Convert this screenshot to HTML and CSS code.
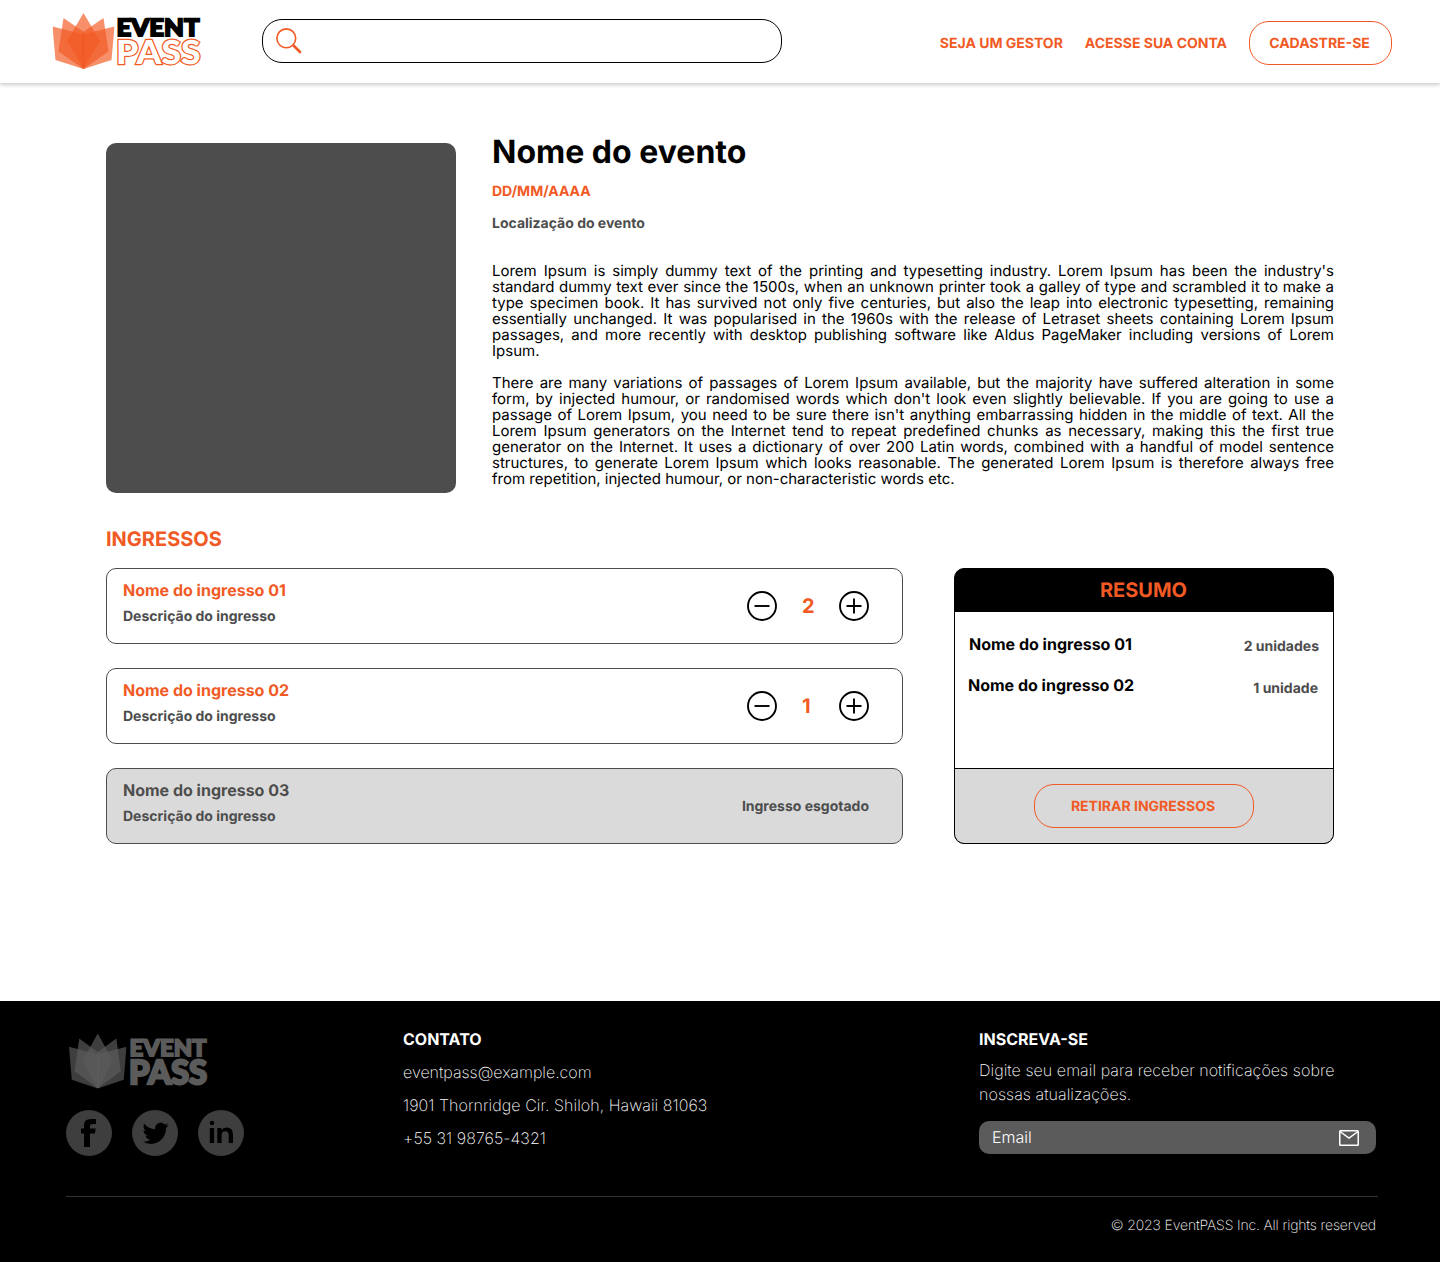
FILE: index.html
```html
<!DOCTYPE html>
<html lang="pt-BR">
<head>
<meta charset="utf-8">
<title>EventPASS</title>
<link rel="stylesheet" href="styles.css">
</head>
<body>
<svg class="defs" width="0" height="0" aria-hidden="true">
  <symbol id="crown" viewBox="0 0 62 56" preserveAspectRatio="none">
    <path d="M31 0 47.500 28 31 56 14.500 28Z"/>
    <path d="M0 13.500 32 21.500V55.500L31 56 3 47Z"/>
    <path d="M62 13.500 30 21.500V55.500L31 56 59 47Z"/>
    <path d="M11 5 32 19.500V55L31 56 6 38.500Z"/>
    <path d="M51 5 30 19.500V55L31 56 56 38.500Z"/>
  </symbol>
</svg>

<header class="topbar">
  <svg class="logo" width="152" height="58" viewBox="0 0 152 58">
    <use href="#crown" x="0.500" y="0" width="62" height="56"/>
    <text class="logo-event" x="64.500" y="23" textLength="83" lengthAdjust="spacingAndGlyphs">EVENT</text>
    <text class="logo-pass" x="64" y="51" textLength="84.500" lengthAdjust="spacingAndGlyphs">PASS</text>
  </svg>
  <div class="search">
    <svg width="26" height="26" viewBox="0 0 26 26"><circle cx="10.3" cy="10.3" r="9.4"/><path class="handle" d="M17.500 17.500 24 24"/></svg>
  </div>
  <nav class="nav">
    <a>SEJA UM GESTOR</a>
    <a>ACESSE SUA CONTA</a>
    <a class="pill">CADASTRE-SE</a>
  </nav>
</header>

<main>
  <section class="event">
    <div class="poster"></div>
    <div class="info">
      <h1>Nome do evento</h1>
      <p class="date">DD/MM/AAAA</p>
      <p class="place">Localização do evento</p>
      <p class="text">Lorem Ipsum is simply dummy text of the printing and typesetting industry. Lorem Ipsum has been the industry's standard dummy text ever since the 1500s, when an unknown printer took a galley of type and scrambled it to make a type specimen book. It has survived not only five centuries, but also the leap into electronic typesetting, remaining essentially unchanged. It was popularised in the 1960s with the release of Letraset sheets containing Lorem Ipsum passages, and more recently with desktop publishing software like Aldus PageMaker including versions of Lorem Ipsum.</p>
      <p class="text">There are many variations of passages of Lorem Ipsum available, but the majority have suffered alteration in some form, by injected humour, or randomised words which don't look even slightly believable. If you are going to use a passage of Lorem Ipsum, you need to be sure there isn't anything embarrassing hidden in the middle of text. All the Lorem Ipsum generators on the Internet tend to repeat predefined chunks as necessary, making this the first true generator on the Internet. It uses a dictionary of over 200 Latin words, combined with a handful of model sentence structures, to generate Lorem Ipsum which looks reasonable. The generated Lorem Ipsum is therefore always free from repetition, injected humour, or non-characteristic words etc.</p>
    </div>
  </section>

  <h2>INGRESSOS</h2>
  <section class="booking">
    <div class="tickets">
      <article class="ticket">
        <div><h3>Nome do ingresso 01</h3><p>Descrição do ingresso</p></div>
        <div class="stepper">
          <svg width="30" height="30" viewBox="0 0 30 30"><circle cx="15" cy="15" r="14"/><path d="M7.500 15h15"/></svg>
          <span>2</span>
          <svg width="30" height="30" viewBox="0 0 30 30"><circle cx="15" cy="15" r="14"/><path d="M7.500 15h15M15 7.500v15"/></svg>
        </div>
      </article>
      <article class="ticket">
        <div><h3>Nome do ingresso 02</h3><p>Descrição do ingresso</p></div>
        <div class="stepper">
          <svg width="30" height="30" viewBox="0 0 30 30"><circle cx="15" cy="15" r="14"/><path d="M7.500 15h15"/></svg>
          <span>1</span>
          <svg width="30" height="30" viewBox="0 0 30 30"><circle cx="15" cy="15" r="14"/><path d="M7.500 15h15M15 7.500v15"/></svg>
        </div>
      </article>
      <article class="ticket soldout">
        <div><h3>Nome do ingresso 03</h3><p>Descrição do ingresso</p></div>
        <p class="status">Ingresso esgotado</p>
      </article>
    </div>
    <aside class="summary">
      <h2>RESUMO</h2>
      <div class="lines">
        <div class="line"><strong>Nome do ingresso 01</strong><span>2 unidades</span></div>
        <div class="line second"><strong>Nome do ingresso 02</strong><span>1 unidade</span></div>
      </div>
      <div class="checkout"><a class="pill">RETIRAR INGRESSOS</a></div>
    </aside>
  </section>
</main>

<footer>
  <div class="columns">
    <div class="brand">
      <svg class="logo muted" width="142" height="57" viewBox="0 0 142 57">
        <use href="#crown" x="0" y="-0.500" width="57.500" height="55"/>
        <text class="logo-event" x="60.500" y="22" textLength="77" lengthAdjust="spacingAndGlyphs">EVENT</text>
        <text class="logo-pass" x="60" y="49.500" textLength="78" lengthAdjust="spacingAndGlyphs">PASS</text>
      </svg>
      <div class="social">
        <svg width="46" height="46" viewBox="0 0 46 46"><circle cx="23" cy="23" r="23"/><path d="M18 37V23.500h-3v-5h3v-3.200q0-6.300 7-6.300H30v5h-3q-3 0-3 2.200v2.300h5.700l-.8 5H24V37Z"/></svg>
        <svg width="46" height="46" viewBox="0 0 46 46"><circle cx="23" cy="23" r="23"/><path transform="translate(10.500 10.300) scale(1.090)" d="M23.950 4.570a10 10 0 0 1-2.820.77 4.960 4.960 0 0 0 2.160-2.720c-.95.560-2 .96-3.130 1.180a4.920 4.920 0 0 0-8.380 4.480C7.690 8.100 4.070 6.130 1.640 3.160a4.820 4.820 0 0 0-.67 2.480c0 1.710.87 3.210 2.190 4.100a4.900 4.900 0 0 1-2.230-.62v.06a4.920 4.920 0 0 0 3.950 4.830 5 5 0 0 1-2.210.08 4.940 4.940 0 0 0 4.600 3.420A9.870 9.870 0 0 1 0 19.540a13.990 13.990 0 0 0 7.550 2.210c9.050 0 14-7.500 14-13.980 0-.21 0-.42-.02-.63a9.940 9.940 0 0 0 2.460-2.550z"/></svg>
        <svg width="46" height="46" viewBox="0 0 46 46"><circle cx="23" cy="23" r="23"/><circle cx="14" cy="13" r="2.300"/><path d="M11.800 18h4.300v15h-4.300ZM19.300 18h4.100v2.200q1.600-2.600 5.200-2.600 6.400 0 6.400 7V33h-4.300v-7.800q0-3.900-3.300-3.900-3.800 0-3.800 4.200V33h-4.300Z"/></svg>
      </div>
    </div>
    <div class="contact">
      <h4>CONTATO</h4>
      <p>eventpass@example.com</p>
      <p class="wide">1901 Thornridge Cir. Shiloh, Hawaii 81063</p>
      <p class="wide">+55 31 98765-4321</p>
    </div>
    <div class="subscribe">
      <h4>INSCREVA-SE</h4>
      <p class="wide">Digite seu email para receber notificações sobre nossas atualizações.</p>
      <div class="email"><span>Email</span>
        <svg width="20" height="16" viewBox="0 0 20 16"><rect x=".75" y=".75" width="18.500" height="14.500" rx=".8"/><path d="M1 1.500 10 8l9-6.500"/></svg>
      </div>
    </div>
  </div>
  <p class="copyright">© 2023 EventPASS Inc. All rights reserved</p>
</footer>
</body>
</html>
```
FILE: styles.css
```css
* { box-sizing: border-box; }
body { margin: 0; background: #fff; color: #000; font-family: Inter, "Liberation Sans", sans-serif; text-rendering: geometricPrecision; }
h1, h2, h3, h4, p { margin: 0; }
svg { display: block; flex: none; overflow: visible; }
.defs { position: absolute; }

.topbar { display: flex; height: 83px; padding: 13px 48px 0 52px; box-shadow: 0 2px 4px rgba(0,0,0,.2); }
.logo { fill: #f15a24; }
.logo use { fill-opacity: .68; }
.logo text { font-family: Lato, sans-serif; font-weight: 900; }
.logo-event { font-size: 24px; fill: #000; stroke: #000; stroke-width: 1.800px; }
.logo-pass { font-size: 33px; fill: #fff; stroke: #f15a24; stroke-width: 2.400px; paint-order: stroke; }
.search { width: 520px; height: 44px; margin: 6px 0 0 58px; padding: 8px 13px; border: 1px solid #000; border-radius: 20px; }
.search svg { fill: none; stroke: #f15a24; stroke-width: 1.600px; }
.search .handle { stroke-width: 2.600px; stroke-linecap: round; }
.nav { display: flex; align-items: center; gap: 22px; height: 44px; margin: 8px 0 0 auto; color: #f15a24; font-size: 14px; font-weight: 700; white-space: nowrap; }
.pill { display: flex; align-items: center; justify-content: center; height: 44px; padding: 0 2px 0 0; border: 1px solid #f15a24; border-radius: 20px; color: #f15a24; font-size: 14px; font-weight: 700; }
.nav .pill { width: 143px; }

main { height: 918px; padding: 48px 106px 0; }
.event { display: flex; gap: 36px; height: 362px; }
.poster { width: 350px; height: 350px; margin-top: 12px; border-radius: 10px; background: #4d4d4d; flex: none; }
.info { flex: 1; }
h1 { font-size: 32px; line-height: 42px; font-weight: 700; }
.date { margin-top: 10px; font-size: 14px; line-height: 18px; font-weight: 700; color: #f15a24; }
.place { margin: 14px 0 30px; font-size: 14px; line-height: 18px; font-weight: 700; color: #4d4d4d; }
.text { font-size: 15px; line-height: 16px; text-align: justify; }
.text + .text { margin-top: 16px; }
h2 { margin-top: 33px; font-size: 20px; line-height: 26px; font-weight: 700; color: #f15a24; }
.booking { display: flex; justify-content: space-between; margin-top: 16px; }
.tickets { display: grid; gap: 24px; width: 797px; }
.ticket { display: flex; justify-content: space-between; height: 76px; padding: 11px 33px 0 16px; border: 1px solid #4d4d4d; border-radius: 10px; }
h3 { font-size: 16px; line-height: 20px; color: #f15a24; }
.ticket p { margin-top: 8px; font-size: 14px; line-height: 18px; font-weight: 700; color: #4d4d4d; }
.stepper { display: grid; grid-template-columns: 55px 37px 30px; height: 30px; margin-top: 11px; align-items: center; }
.stepper svg { fill: none; stroke: #000; stroke-width: 1.900px; }
.stepper span { font-size: 20px; font-weight: 700; color: #f15a24; }
.soldout { background: #dadada; }
.soldout h3 { color: #4d4d4d; }
.ticket .status { margin-top: 18px; }
.summary { display: flex; flex-direction: column; width: 380px; height: 276px; border: 1px solid #000; border-radius: 10px; background: #000; overflow: hidden; }
.summary h2 { height: 43px; margin: 0; padding-right: 1px; line-height: 43px; text-align: center; }
.lines { flex: 1; padding: 22px 14px 0; background: #fff; }
.line { display: flex; justify-content: space-between; height: 41px; font-size: 16px; line-height: 20px; }
.line span { margin-top: 3px; font-size: 14px; font-weight: 700; color: #4d4d4d; }
.second { margin: 0 1px 0 -1px; }
.second span { margin-top: 4px; }
.checkout { display: flex; justify-content: center; height: 75px; padding-top: 15px; border-top: 1px solid #000; background: #d9d9d9; }
.checkout .pill { width: 220px; }

footer { height: 261px; padding: 26px 62px 0 66px; background: #000; color: #fff; font-size: 16px; font-weight: 200; }
.columns { display: grid; grid-template-columns: 337px 576px 397px; height: 169px; }
.brand { padding-top: 7px; }
.muted { margin-left: 3px; fill: #5b5b5b; }
.muted .logo-event, .muted .logo-pass { fill: #5b5b5b; stroke: #5b5b5b; }
.muted .logo-event { font-size: 23px; }
.social { display: flex; gap: 20px; margin-top: 19px; fill: #000; }
.social svg > circle:first-child { fill: #3e3e3e; }
h4 { font-size: 16px; line-height: 24px; font-weight: 700; }
.contact p { margin-top: 9px; line-height: 24px; }
.subscribe p { margin-top: 7px; line-height: 24px; }
.wide { letter-spacing: .06px; }
.email { display: flex; align-items: center; justify-content: space-between; height: 33px; margin-top: 15px; padding: 0 17px 0 13px; border-radius: 10px; background: #5b5b5b; font-weight: 300; }
.email span { padding-bottom: 2px; }
.email svg { fill: none; stroke: #fff; stroke-width: 1.500px; }
.copyright { width: 1312px; border-top: 1px solid #333; padding: 19px 2px 0 0; text-align: right; font-size: 14px; line-height: 20px; font-weight: 200; letter-spacing: -.14px; }
```
